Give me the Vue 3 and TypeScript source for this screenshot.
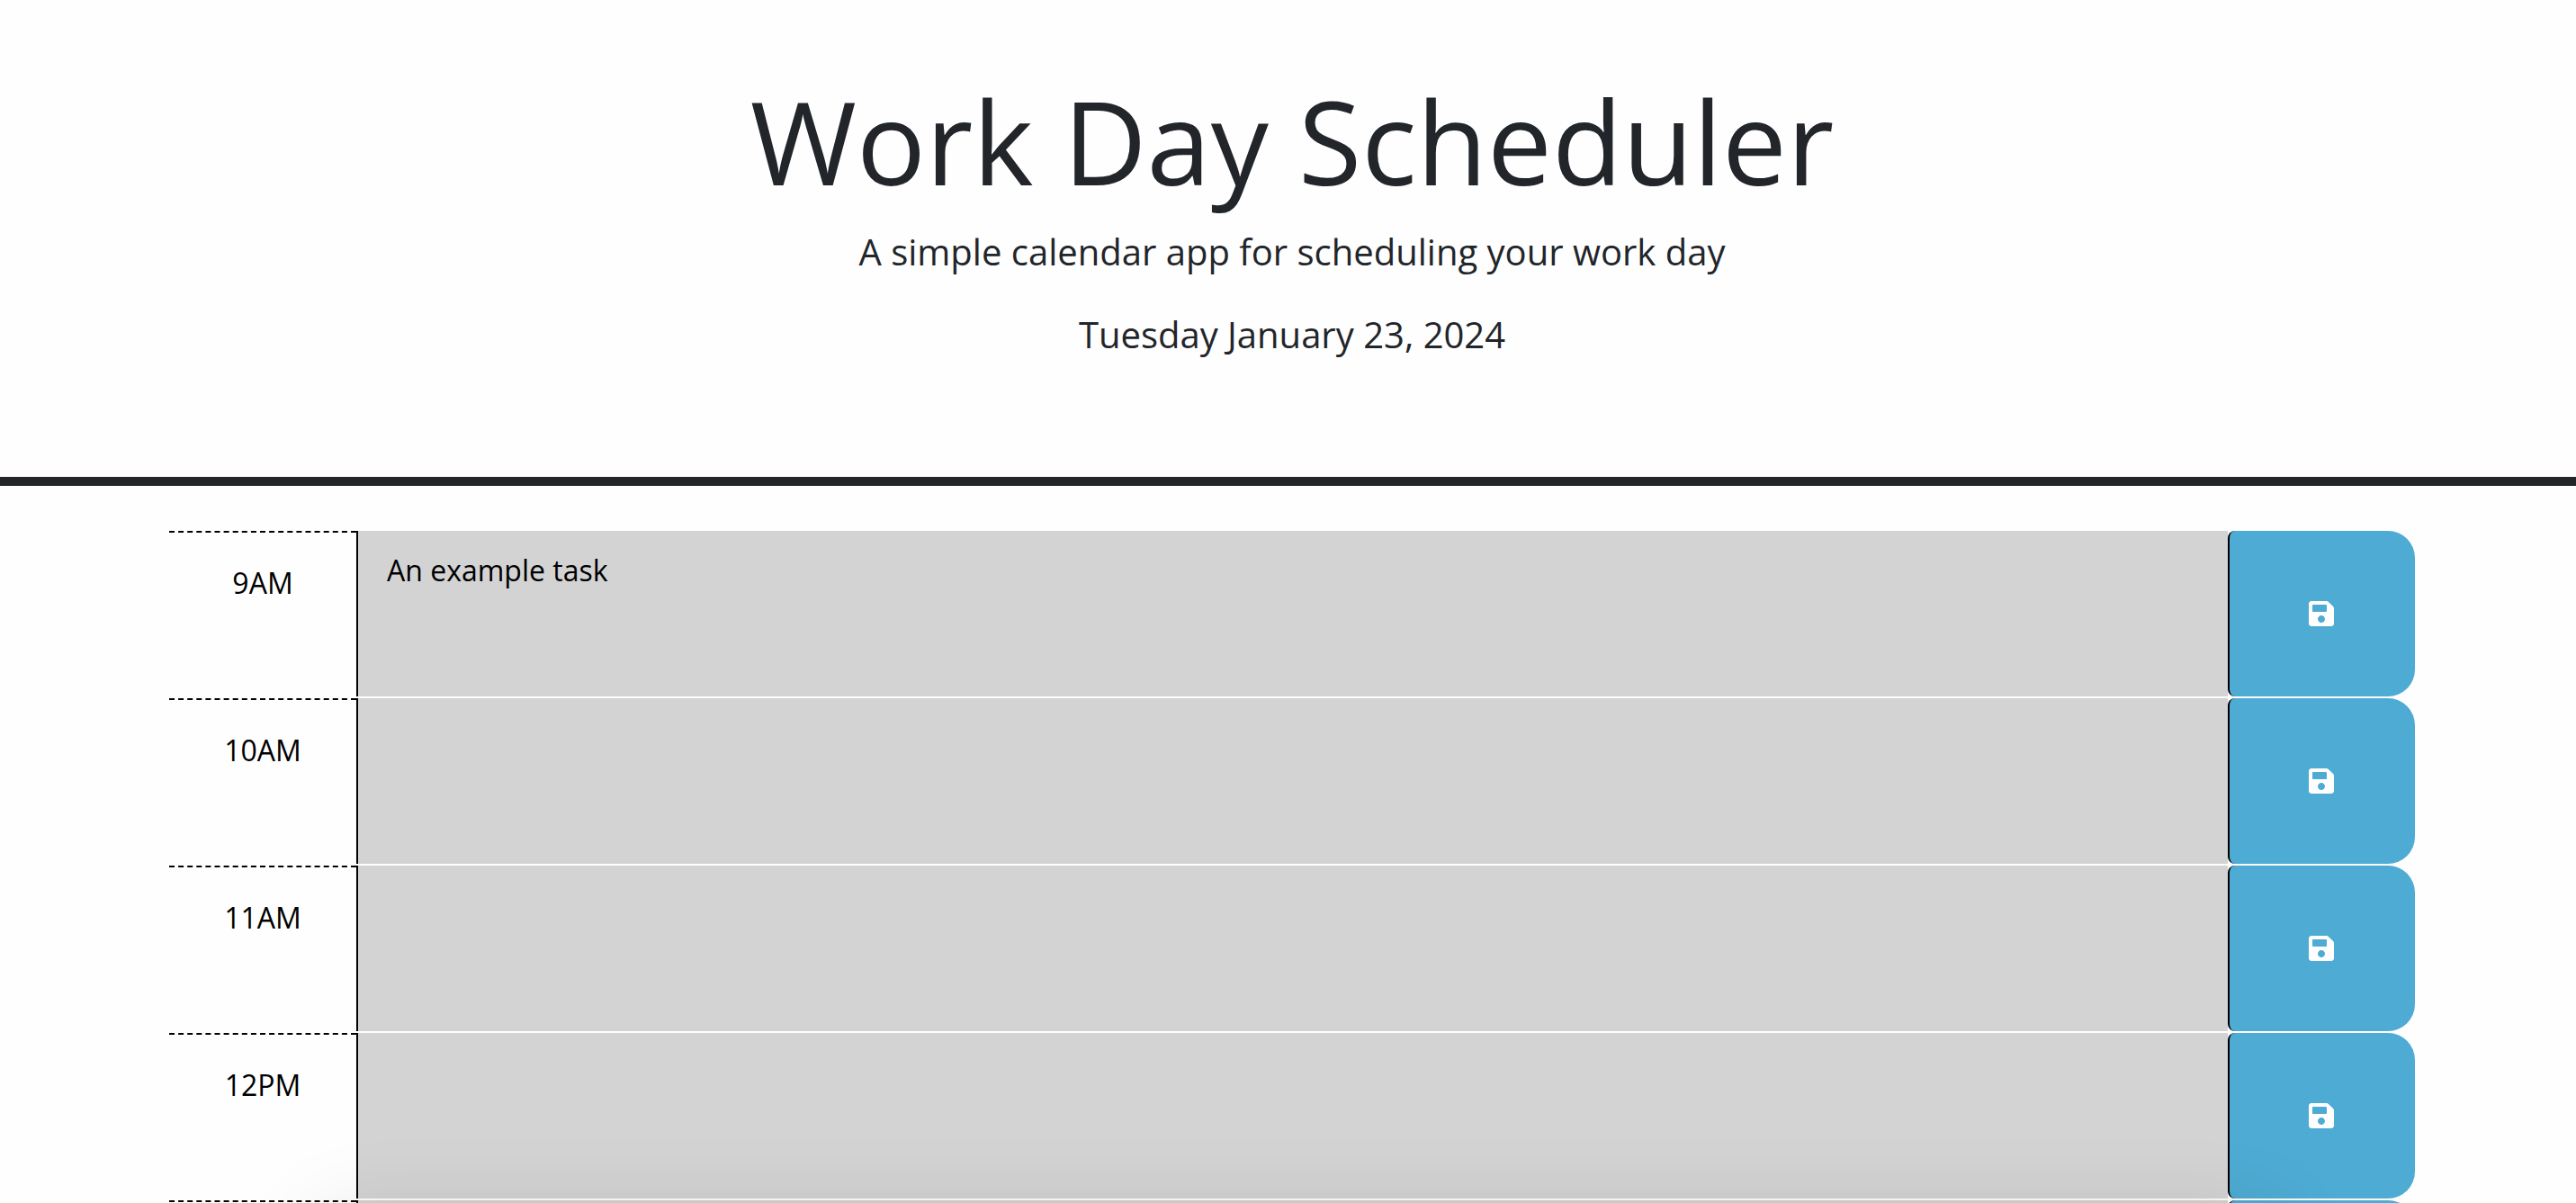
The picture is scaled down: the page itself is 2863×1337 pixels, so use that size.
<script setup lang="ts">
import { ref } from 'vue'

interface TimeBlock {
  id: string
  label: string
  task: string
}

const today = 'Tuesday January 23, 2024'

const blocks = ref<TimeBlock[]>([
  { id: 'hour-9', label: '9AM', task: 'An example task' },
  { id: 'hour-10', label: '10AM', task: '' },
  { id: 'hour-11', label: '11AM', task: '' },
  { id: 'hour-12', label: '12PM', task: '' },
  { id: 'hour-13', label: '1PM', task: '' },
])

function save(block: TimeBlock): void {
  localStorage.setItem(block.id, block.task)
}
</script>

<template>
  <div class="page">
    <header class="header">
      <h1 class="title">Work Day Scheduler</h1>
      <p class="lead">A simple calendar app for scheduling your work day</p>
      <p class="lead">{{ today }}</p>
    </header>

    <main class="schedule">
      <div v-for="block in blocks" :key="block.id" class="time-block">
        <label class="hour" :for="block.id">{{ block.label }}</label>
        <textarea :id="block.id" v-model="block.task" class="description"></textarea>
        <button class="save" type="button" :aria-label="`Save ${block.label}`" @click="save(block)">
          <svg class="save-icon" viewBox="0 0 448 512" aria-hidden="true">
            <path
              fill="currentColor"
              d="M433.941 129.941l-83.882-83.882A48 48 0 0 0 316.118 32H48C21.49 32 0 53.49 0 80v352c0 26.51 21.49 48 48 48h352c26.51 0 48-21.49 48-48V163.882a48 48 0 0 0-14.059-33.941zM224 416c-35.346 0-64-28.654-64-64 0-35.346 28.654-64 64-64s64 28.654 64 64c0 35.346-28.654 64-64 64zm96-304.52V212c0 6.627-5.373 12-12 12H76c-6.627 0-12-5.373-12-12V108c0-6.627 5.373-12 12-12h228.52c3.183 0 6.235 1.264 8.485 3.515l3.48 3.48A11.996 11.996 0 0 1 320 111.48z"
            />
          </svg>
        </button>
      </div>
    </main>
    <div class="bottom-shade" aria-hidden="true"></div>
  </div>
</template>

<style>
body {
  margin: 0;
  background: #fefefe;
}
</style>

<style scoped>
.page {
  height: 100vh;
  overflow: hidden;
  font-family: 'Open Sans', sans-serif;
  font-size: 32px;
  line-height: 48px;
  color: #000;
}

.header {
  display: flex;
  flex-direction: column;
  align-items: center;
  padding: 80px 0 64px 9px;
  margin-bottom: 50px;
  border-bottom: 10px solid #22252a;
  color: #22252a;
  text-align: center;
}

.title {
  margin: 0 0 16px;
  font-size: 128px;
  font-weight: 400;
  line-height: 154px;
}

.lead {
  margin: 0 0 32px;
  font-size: 40px;
  line-height: 60px;
}

.lead:last-child {
  margin-bottom: 64px;
}

.schedule {
  margin: 0 179px 0 188px;
}

.time-block {
  display: grid;
  grid-template-columns: 1fr 10fr 1fr;
  height: 184px;
  margin-bottom: 2px;
}

.hour {
  padding: 32px 0;
  border-top: 2px dashed #000;
  text-align: center;
}

.description {
  box-sizing: border-box;
  width: 100%;
  height: 100%;
  margin: 0;
  padding: 20px 32px;
  border: 0;
  border-left: 2px solid #000;
  border-radius: 0;
  outline: 0;
  resize: none;
  overflow: hidden;
  background: #d3d3d3;
  color: #000;
  font: inherit;
}

.save {
  display: flex;
  align-items: center;
  justify-content: center;
  padding: 0 2px 0 0;
  border: 0;
  border-left: 2px solid #000;
  border-radius: 8px 30px 30px 8px;
  background: #4eabd3;
  color: #fff;
  cursor: pointer;
}

.save-icon {
  width: 28px;
  height: 32px;
}

.bottom-shade {
  position: fixed;
  top: 100%;
  left: 360px;
  right: 340px;
  height: 200px;
  box-shadow: 0 24px 100px rgba(0, 0, 0, 0.15);
  pointer-events: none;
}
</style>
